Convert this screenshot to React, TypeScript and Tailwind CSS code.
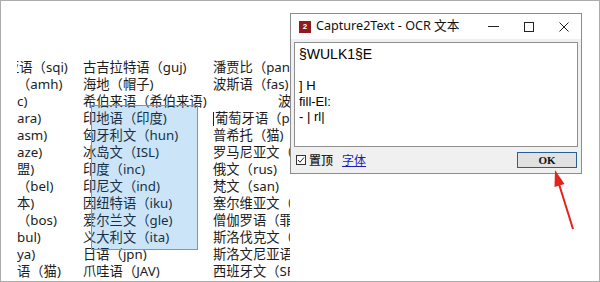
import React from "react";

const col1 = [
  { t: "亚语（sqi)", ml: "-ml-[11px]" },
  { t: "（amh)", ml: "" },
  { t: "c)", ml: "" },
  { t: "ara)", ml: "" },
  { t: "asm)", ml: "" },
  { t: "aze)", ml: "" },
  { t: "盟)", ml: "" },
  { t: "（bel)", ml: "" },
  { t: "本)", ml: "" },
  { t: "（bos)", ml: "" },
  { t: "bul)", ml: "" },
  { t: "ya)", ml: "" },
  { t: "语（猫)", ml: "" },
];

const col2 = [
  "古吉拉特语（guj)",
  "海地（帽子)",
  "希伯来语（希伯来语)",
  "印地语（印度)",
  "匈牙利文（hun)",
  "冰岛文（ISL)",
  "印度（inc)",
  "印尼文（ind)",
  "因纽特语（iku)",
  "爱尔兰文（gle)",
  "义大利文（ita)",
  "日语（jpn)",
  "爪哇语（JAV)",
];

const col3 = [
  "潘贾比（pan)",
  "波斯语（fas)",
  "波兰文（pol)",
  "葡萄牙语（por)",
  "普希托（猫)",
  "罗马尼亚文（ron)",
  "俄文（rus)",
  "梵文（san)",
  "塞尔维亚文（srp)",
  "僧伽罗语（罪)",
  "斯洛伐克文（slk)",
  "斯洛文尼亚语（slv)",
  "西班牙文（SPA)",
];

export default function App() {
  return (
    <div className="relative h-[282px] w-[600px] overflow-hidden border border-[#acacac] bg-white">
      {/* background list */}
      <div className="ml-[16px] mt-[58px] grid w-[273px] grid-cols-[66px_130px_1fr] overflow-hidden font-[family-name:'Noto_Sans','Noto_Sans_CJK_SC',sans-serif] text-[13.3px] leading-[17px] text-[#1c1c1c]">
        <div className="flex flex-col">
          {col1.map((r) => (
            <div key={r.t} className={`h-[17px] whitespace-nowrap ${r.ml}`}>{r.t}</div>
          ))}
        </div>
        <div className="flex flex-col">
          {col2.map((t) => (
            <div key={t} className="h-[17px] whitespace-nowrap">{t}</div>
          ))}
        </div>
        <div className="flex flex-col">
          {col3.map((t, i) => (
            <div key={t} className={`flex h-[17px] items-center whitespace-nowrap ${i === 2 ? "pl-[65px]" : ""}`}>
              {i === 3 && <span className="mr-px inline-block h-[14px] w-px bg-[#222]" />}
              {t}
            </div>
          ))}
        </div>
      </div>

      {/* selection rectangle */}
      <div className="absolute left-[90px] top-[104px] h-[145px] w-[107px] border border-[#5a9de0] bg-[#0078d7]/20" />

      {/* Capture2Text window */}
      <div className="absolute left-[289px] top-[12px] flex h-[161px] w-[292px] flex-col border border-[#8c8c8c] bg-[#f0f0f0]">
        <div className="flex h-[25px] items-center bg-white pl-[8px]">
          <div className="flex h-[12px] w-[12px] items-center justify-center bg-[#8e1c1c] font-[family-name:'Liberation_Sans',sans-serif] text-[8px] font-bold leading-none text-white">
            2
          </div>
          <span className="ml-[5px] font-[family-name:'Noto_Sans','Noto_Sans_CJK_SC',sans-serif] text-[12.6px] text-[#111]">
            Capture2Text - OCR 文本
          </span>
          <div className="ml-auto flex h-full">
            <div className="flex w-[35px] items-center justify-center">
              <svg width="11" height="11" viewBox="0 0 11 11">
                <line x1="0" y1="5.5" x2="11" y2="5.5" stroke="#222" strokeWidth="1" />
              </svg>
            </div>
            <div className="flex w-[35px] items-center justify-center">
              <svg width="10" height="10" viewBox="0 0 10 10">
                <rect x="0.5" y="0.5" width="9" height="9" fill="none" stroke="#222" strokeWidth="1" />
              </svg>
            </div>
            <div className="flex w-[35px] items-center justify-center">
              <svg width="10" height="10" viewBox="0 0 10 10">
                <path d="M0.5 0.5L9.5 9.5M9.5 0.5L0.5 9.5" stroke="#222" strokeWidth="1" />
              </svg>
            </div>
          </div>
        </div>

        <div className="flex flex-1 flex-col px-[3px] pt-[3px]">
          <div className="h-[105px] border border-[#8f8f8f] bg-white pl-[4px] pt-[4px] font-[family-name:'Liberation_Sans',sans-serif] text-[13px] leading-[15.5px] text-black">
            <div className="text-[14px]">§WULK1§E</div>
            <div>&nbsp;</div>
            <div>] H</div>
            <div>fill-El:</div>
            <div>- | rl|</div>
          </div>

          <div className="flex flex-1 items-center pl-[2px] pr-[1px]">
            <div className="flex h-[10px] w-[10px] items-center justify-center border border-[#333] bg-white">
              <svg width="8" height="8" viewBox="0 0 8 8">
                <path d="M1 4L3 6.2L7 1.5" fill="none" stroke="#222" strokeWidth="1" />
              </svg>
            </div>
            <span className="ml-[3px] font-[family-name:'Noto_Sans_CJK_SC',sans-serif] text-[12px] font-medium text-[#222]">置顶</span>
            <span className="ml-[9px] font-[family-name:'Noto_Sans_CJK_SC',sans-serif] text-[12px] text-[#1b1bb8] underline">字体</span>
            <button className="ml-auto flex h-[16px] w-[60px] items-center justify-center border border-[#2a5f93] bg-[#e1e1e1] font-[family-name:'Liberation_Serif',serif] text-[11px] font-bold leading-none text-[#111]">
              OK
            </button>
          </div>
        </div>
      </div>

      {/* red arrow */}
      <svg className="pointer-events-none absolute left-0 top-0" width="598" height="280" viewBox="0 0 598 280">
        <line x1="572" y1="228" x2="558" y2="183" stroke="#e3231c" strokeWidth="2" />
        <polygon points="554,169 563.5,183 553.5,186" fill="#e3231c" />
      </svg>
    </div>
  );
}
